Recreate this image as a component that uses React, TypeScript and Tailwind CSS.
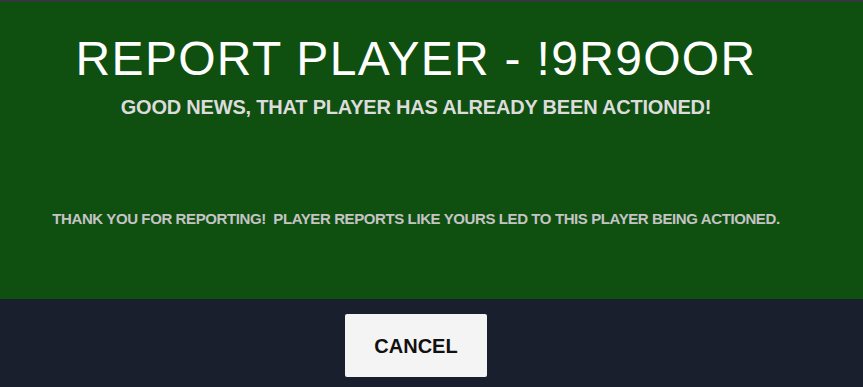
import React from "react";

export default function App() {
  return (
    <div className="flex h-[387px] w-[863px] flex-col overflow-hidden bg-[#1a1f2e]">
      <div className="flex h-[299px] flex-col border-t-2 border-[#333a3a] bg-[#0f4f10] pr-[31px]">
        <h1 className="mt-[33px] text-center font-['Liberation_Sans',sans-serif] text-[48px] leading-[48px] font-normal tracking-[1.3px] text-white">
          REPORT PLAYER - !9R9OOR
        </h1>
        <p className="mt-[12px] text-center font-['Liberation_Sans',sans-serif] text-[20px] leading-[24px] font-bold tracking-[-0.2px] text-[#dcdcdc]">
          GOOD NEWS, THAT PLAYER HAS ALREADY BEEN ACTIONED!
        </p>
        <p className="mt-[91px] text-center font-['Liberation_Sans',sans-serif] text-[15px] leading-[18px] font-bold tracking-[-0.4px] text-[#c4c4c4] whitespace-pre">
          {"THANK YOU FOR REPORTING!  PLAYER REPORTS LIKE YOURS LED TO THIS PLAYER BEING ACTIONED."}
        </p>
      </div>
      <div className="flex flex-1 justify-center pt-[15px] pr-[31px]">
        <button className="h-[63px] w-[142px] rounded-[2px] bg-[#f4f4f4] font-['Liberation_Sans',sans-serif] text-[20px] font-bold text-[#111]">
          CANCEL
        </button>
      </div>
    </div>
  );
}
